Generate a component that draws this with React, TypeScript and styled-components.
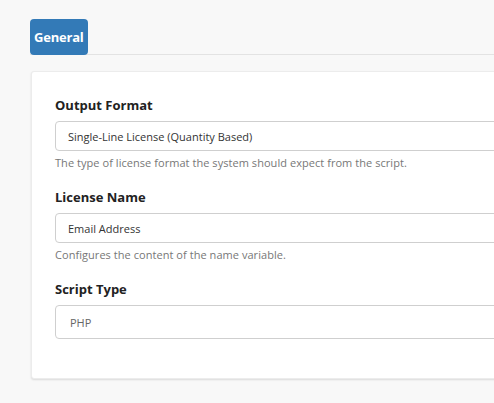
import styled, { createGlobalStyle } from "styled-components";

const Global = createGlobalStyle`
  html, body {
    margin: 0;
    padding: 0;
    background: #f8f8f8;
    font-family: "Open Sans", "Liberation Sans", sans-serif;
  }
`;

const Page = styled.div`
  padding: 19px 0 0 30px;
  width: 494px;
  height: 403px;
  box-sizing: border-box;
  overflow: hidden;
`;

const TabBar = styled.div`
  display: flex;
  align-items: flex-end;
  border-bottom: 1px solid #e3e3e3;
  width: 520px;
`;

const Tab = styled.div`
  background: #337ab7;
  color: #fff;
  font-weight: 700;
  font-size: 13px;
  border-radius: 4px;
  height: 36px;
  padding: 0 4px;
  display: flex;
  align-items: center;
  margin-bottom: -1px;
  letter-spacing: -0.2px;
`;

const Card = styled.div`
  margin: 16px 0 0 1px;
  width: 520px;
  background: #fff;
  border: 1px solid #ececec;
  box-shadow: 0 1px 2px rgba(0, 0, 0, 0.12);
  border-radius: 3px;
  padding: 24px 0 39px 23px;
  box-sizing: border-box;
`;

const Field = styled.div`
  display: flex;
  flex-direction: column;
  margin-bottom: 18px;
  &:last-child {
    margin-bottom: 0;
  }
`;

const Label = styled.div`
  font-weight: 700;
  font-size: 13px;
  color: #222;
  margin-bottom: 7px;
`;

const Input = styled.div<{ $tall?: boolean; $muted?: boolean }>`
  height: ${(p) => (p.$tall ? 34 : 30)}px;
  box-sizing: border-box;
  border: 1px solid #cfcfcf;
  border-radius: 4px;
  display: flex;
  align-items: center;
  padding-left: ${(p) => (p.$muted ? 14 : 12)}px;
  font-size: 11px;
  color: ${(p) => (p.$muted ? "#666" : "#333")};
  background: #fff;
`;

const Help = styled.div`
  font-size: 11px;
  color: #777;
  margin-top: 4px;
  letter-spacing: 0.05px;
`;

export default function App() {
  return (
    <Page>
      <Global />
      <TabBar>
        <Tab>General</Tab>
      </TabBar>
      <Card>
        <Field>
          <Label>Output Format</Label>
          <Input>Single-Line License (Quantity Based)</Input>
          <Help>The type of license format the system should expect from the script.</Help>
        </Field>
        <Field>
          <Label>License Name</Label>
          <Input>Email Address</Input>
          <Help>Configures the content of the name variable.</Help>
        </Field>
        <Field>
          <Label>Script Type</Label>
          <Input $tall $muted>PHP</Input>
        </Field>
      </Card>
    </Page>
  );
}
